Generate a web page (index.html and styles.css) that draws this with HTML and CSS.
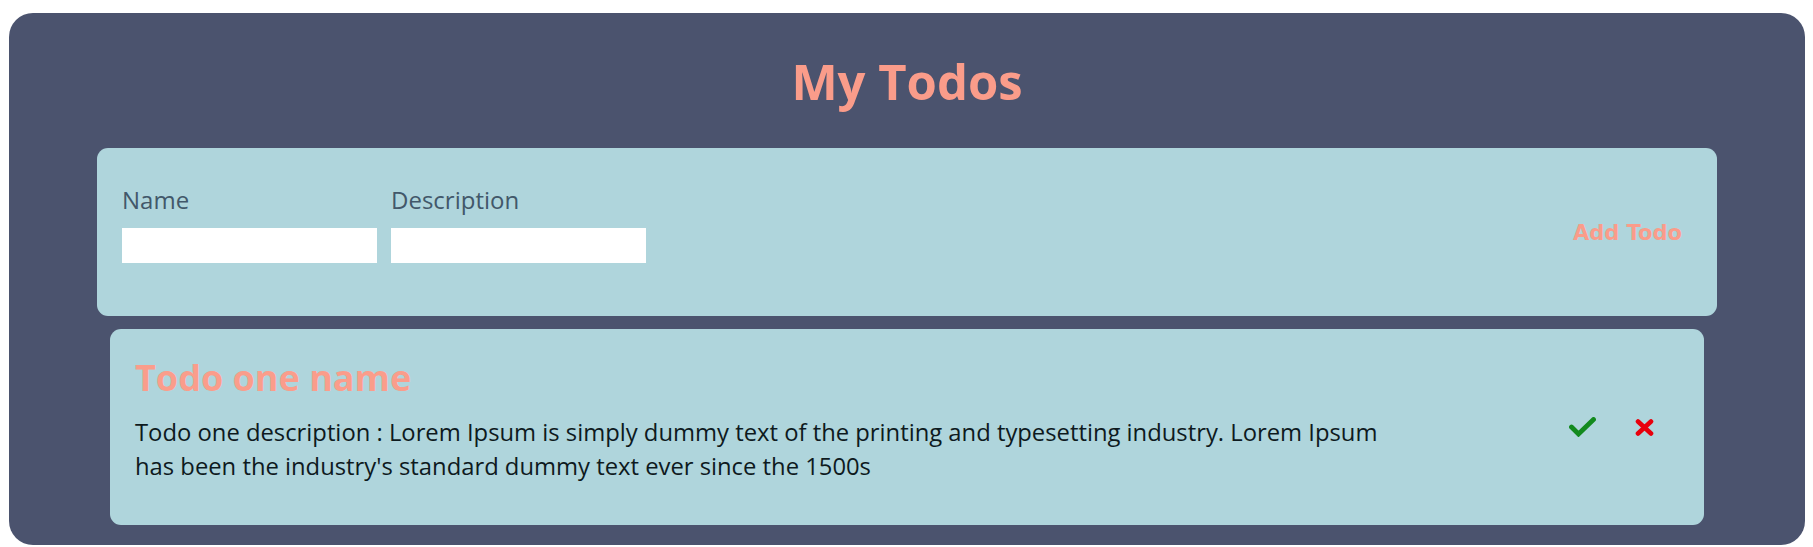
FILE: index.html
```html
<!DOCTYPE html>
<html lang="en">
<head>
<meta charset="utf-8">
<title>My Todos</title>
<link rel="stylesheet" href="styles.css">
</head>
<body>
<main class="app">
  <h1 class="app-title">My Todos</h1>
  <form class="todo-form">
    <div class="fields">
      <div class="field">
        <label class="field-label" for="name">Name</label>
        <input class="field-input" id="name" type="text">
      </div>
      <div class="field">
        <label class="field-label" for="desc">Description</label>
        <input class="field-input" id="desc" type="text">
      </div>
    </div>
    <button class="add-btn" type="button">Add Todo</button>
  </form>
  <section class="todo">
    <div class="todo-body">
      <h2 class="todo-name">Todo one name</h2>
      <p class="todo-desc">Todo one description : Lorem Ipsum is simply dummy text of the printing and typesetting industry. Lorem Ipsum has been the industry's standard dummy text ever since the 1500s</p>
    </div>
    <div class="todo-actions">
      <svg class="icon-check" width="27" height="20" viewBox="0 0 27 20"><polyline points="2.5,10 9.5,17 24.5,2.5" fill="none" stroke="#128a1e" stroke-width="4.8" stroke-linejoin="miter" stroke-linecap="round"/></svg>
      <svg class="icon-cross" width="19" height="17" viewBox="0 0 19 17"><path d="M3 2.5 L16 14.5 M16 2.5 L3 14.5" fill="none" stroke="#e8000c" stroke-width="4.6" stroke-linecap="round"/></svg>
    </div>
  </section>
</main>
</body>
</html>
```
FILE: styles.css
```css
html, body {
  margin: 0;
  padding: 0;
  background: #ffffff;
}

body {
  font-family: "Open Sans", "Noto Sans", sans-serif;
}

.app {
  margin: 13px 8px 2px 9px;
  height: 532px;
  box-sizing: border-box;
  padding-top: 35px;
  background: #4b536e;
  border-radius: 24px;
  display: flex;
  flex-direction: column;
  align-items: center;
}

.app-title {
  margin: 0 0 33px;
  font-size: 49px;
  line-height: 67px;
  font-weight: 700;
  color: #fa9c8a;
  text-align: center;
}

.todo-form {
  width: 1620px;
  height: 168px;
  box-sizing: border-box;
  padding: 0 35px 0 25px;
  background: #afd5dc;
  border-radius: 11px;
  display: flex;
  justify-content: space-between;
  align-items: center;
}

.fields {
  display: flex;
  gap: 14px;
  align-self: flex-start;
  padding-top: 35px;
}

.field {
  display: flex;
  flex-direction: column;
}

.field-label {
  font-size: 24px;
  line-height: 33px;
  color: #42586a;
  margin-bottom: 12px;
}

.field-input {
  width: 255px;
  height: 35px;
  box-sizing: border-box;
  border: none;
  margin: 0;
  padding: 0 6px;
  background: #ffffff;
  outline: none;
}

.add-btn {
  border: none;
  background: none;
  padding: 0;
  margin-top: 2px;
  font-family: "DejaVu Sans", sans-serif;
  font-weight: 700;
  font-size: 21px;
  color: #fa9c8a;
  cursor: pointer;
}

.todo {
  margin-top: 13px;
  width: 1594px;
  box-sizing: border-box;
  padding: 0 50px 0 25px;
  background: #afd5dc;
  border-radius: 11px;
  display: flex;
  align-items: center;
}

.todo-body {
  width: 1265px;
  padding: 24px 0 42px;
}

.todo-name {
  margin: 0 0 13px;
  font-size: 36px;
  line-height: 49px;
  font-weight: 700;
  color: #fa9d8b;
}

.todo-desc {
  margin: 0;
  font-size: 23.8px;
  line-height: 34px;
  color: #0e1a1e;
}

.todo-actions {
  margin-left: auto;
  display: flex;
  align-items: center;
  gap: 39px;
}

.icon-check,
.icon-cross {
  display: block;
}
```
